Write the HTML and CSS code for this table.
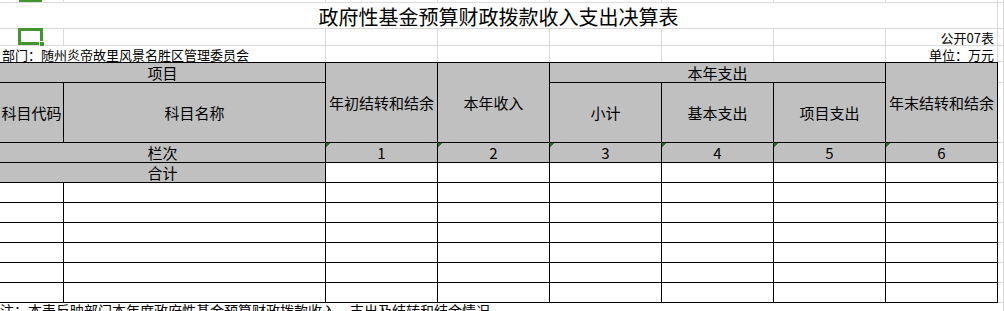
FILE: index.html
```html
<!DOCTYPE html>
<html lang="zh-CN">
<head>
<meta charset="utf-8">
<title>政府性基金预算财政拨款收入支出决算表</title>
<link rel="stylesheet" href="styles.css">
</head>
<body>
<div class="sheet">
  <!-- row 1 -->
  <div class="g"></div><div class="g"></div><div class="g"></div><div class="g"></div><div class="g"></div><div class="g"></div><div class="g"></div><div class="g"></div><div class="g"></div>
  <!-- row 2: title -->
  <div class="g span8 title">政府性基金预算财政拨款收入支出决算表</div><div class="g"></div>
  <!-- row 3 -->
  <div class="g"></div><div class="g"></div><div class="g"></div><div class="g"></div><div class="g"></div><div class="g"></div><div class="g"></div><div class="g meta">公开07表</div><div class="g"></div>
  <!-- row 4 -->
  <div class="g-open span2 meta dept">部门：随州炎帝故里风景名胜区管理委员会</div><div class="g-open"></div><div class="g-open"></div><div class="g-open"></div><div class="g-open"></div><div class="g-open"></div><div class="g-open meta">单位：万元</div><div class="g"></div>
  <!-- header row 1 -->
  <div class="c hd top span2">项目</div>
  <div class="c hd top rows2">年初结转和结余</div>
  <div class="c hd top rows2">本年收入</div>
  <div class="c hd top span3">本年支出</div>
  <div class="c hd top rows2">年末结转和结余</div>
  <div class="g"></div>
  <!-- header row 2 -->
  <div class="c hd">科目代码</div>
  <div class="c hd">科目名称</div>
  <div class="c hd">小计</div>
  <div class="c hd">基本支出</div>
  <div class="c hd">项目支出</div>
  <div class="g"></div>
  <!-- 栏次 -->
  <div class="c hd span2">栏次</div>
  <div class="c hd mark">1</div><div class="c hd mark">2</div><div class="c hd mark">3</div><div class="c hd mark">4</div><div class="c hd mark">5</div><div class="c hd mark">6</div>
  <div class="g"></div>
  <!-- 合计 -->
  <div class="c hd span2">合计</div>
  <div class="c"></div><div class="c"></div><div class="c"></div><div class="c"></div><div class="c"></div><div class="c"></div>
  <div class="g"></div>
  <!-- data rows -->
  <div class="c"></div><div class="c"></div><div class="c"></div><div class="c"></div><div class="c"></div><div class="c"></div><div class="c"></div><div class="c"></div><div class="g"></div>
  <div class="c"></div><div class="c"></div><div class="c"></div><div class="c"></div><div class="c"></div><div class="c"></div><div class="c"></div><div class="c"></div><div class="g"></div>
  <div class="c"></div><div class="c"></div><div class="c"></div><div class="c"></div><div class="c"></div><div class="c"></div><div class="c"></div><div class="c"></div><div class="g"></div>
  <div class="c"></div><div class="c"></div><div class="c"></div><div class="c"></div><div class="c"></div><div class="c"></div><div class="c"></div><div class="c"></div><div class="g"></div>
  <div class="c"></div><div class="c"></div><div class="c"></div><div class="c"></div><div class="c"></div><div class="c"></div><div class="c"></div><div class="c"></div><div class="g"></div>
  <div class="c"></div><div class="c"></div><div class="c"></div><div class="c"></div><div class="c"></div><div class="c"></div><div class="c"></div><div class="c"></div><div class="g"></div>
  <!-- note -->
  <div class="span8 note">注：本表反映部门本年度政府性基金预算财政拨款收入、支出及结转和结余情况。</div><div class="g-open"></div>

  <!-- selection overlay -->
  <div class="col-mark"></div>
  <div class="sel"></div>
  <div class="sel-handle"></div>
</div>
</body>
</html>
```

FILE: styles.css
```css
html, body {
  margin: 0;
  padding: 0;
  overflow: hidden;
  background: #fff;
}

body {
  font-family: "Noto Sans CJK SC", "Noto Sans", sans-serif;
  color: #000;
}

.sheet {
  position: relative;
  display: grid;
  grid-template-columns: 64px 262px repeat(6, 112px) 6px;
  grid-template-rows: 3px 26px 17px 16px 21px 60px 20px 20px repeat(6, 20px) 1fr;
  height: 311px;
  overflow: hidden;
}

.sheet > div {
  box-sizing: border-box;
  min-width: 0;
}

.g {
  border-right: 1px solid #d9d9d9;
  border-bottom: 1px solid #d9d9d9;
}

.g-open {
  border-right: 1px solid #d9d9d9;
}

.c {
  border-right: 1px solid #000;
  border-bottom: 1px solid #000;
  display: flex;
  align-items: center;
  justify-content: center;
  font-size: 15px;
  line-height: 18px;
  white-space: nowrap;
}

.hd {
  background: #c0c0c0;
}

.top {
  border-top: 1px solid #000;
}

.span2 { grid-column: span 2; }
.span3 { grid-column: span 3; }
.span8 { grid-column: span 8; }
.rows2 { grid-row: span 2; }

.title {
  display: flex;
  align-items: flex-end;
  justify-content: center;
  font-size: 20px;
  line-height: 22px;
  white-space: nowrap;
}

.meta {
  display: flex;
  align-items: flex-end;
  justify-content: flex-end;
  padding-right: 3px;
  font-size: 13px;
  line-height: 15px;
  white-space: nowrap;
}

.dept {
  justify-content: flex-start;
  padding-left: 2px;
}

.mark {
  background: linear-gradient(135deg, #1f7a1f 0 3.5px, transparent 3.5px) #c0c0c0;
}

.note {
  font-size: 14px;
  line-height: 14px;
  white-space: nowrap;
  overflow: hidden;
}

.col-mark {
  position: absolute;
  left: 19px;
  top: 0;
  width: 23px;
  height: 2px;
  background: #439530;
}

.sel {
  position: absolute;
  left: 18px;
  top: 28px;
  width: 25px;
  height: 17px;
  border: 3px solid #439530;
}

.sel-handle {
  position: absolute;
  left: 39px;
  top: 41px;
  width: 6px;
  height: 6px;
  background: #439530;
  border: 1px solid #fff;
}
```
